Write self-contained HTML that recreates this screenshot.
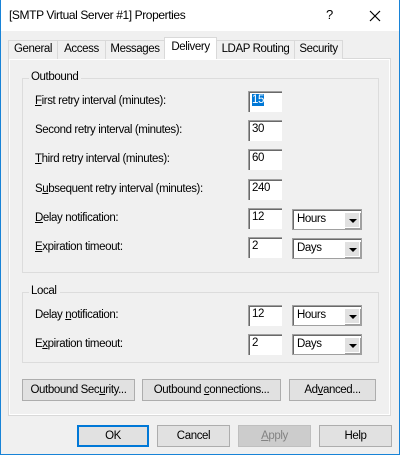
<!DOCTYPE html>
<html><head><style>
*{box-sizing:border-box;margin:0;padding:0}
body{width:400px;height:455px;background:#f0f0f0;font-family:"Liberation Sans",sans-serif;font-size:11.5px;letter-spacing:-0.4px;color:#000;position:relative;overflow:hidden}
.a{position:absolute;white-space:nowrap}
.win{position:absolute;left:0;top:0;width:400px;height:455px;border:1px solid #1883d7;border-top:none}
.title{position:absolute;left:0;top:0;width:400px;height:31px;background:#fff}
.tab{position:absolute;top:40px;height:19px;border:1px solid #d9d9d9;border-bottom:none;background:#f0f0f0;text-align:center;line-height:17px}
.tab.sel{top:37px;height:22px;background:#fff;border-color:#d9d9d9;z-index:2;line-height:19px}
.panel{position:absolute;left:8px;top:58px;width:383px;height:358px;border:1px solid #d9d9d9;background:#fff}
.inner{position:absolute;left:1px;top:1px;right:1px;bottom:1px;background:#f0f0f0}
.grp{position:absolute;border:1px solid #dcdcdc}
.gl{position:absolute;background:#f0f0f0;padding:0 3px 0 2px;top:-8px;left:6px}
.tb{position:absolute;width:36px;height:23px;background:#fff;border:1px solid #f0f0f0;box-shadow:inset 1px 1px 0 #a0a0a0,inset 2px 2px 0 #696969;padding:3px 0 0 4px}
.dd{position:absolute;width:70px;height:21px;background:#fff;border:1px solid #a0a0a0;box-shadow:inset 1px 1px 0 #696969;padding:3px 0 0 4px}
.dd .ar{position:absolute;right:1px;top:2px;width:16px;height:16px;background:#e1e1e1;border:1px solid #fff;box-shadow:1px 1px 0 #a0a0a0}
.dd .ar:after{content:"";position:absolute;left:4px;top:6px;border-left:4px solid transparent;border-right:4px solid transparent;border-top:4px solid #000}
.btn{position:absolute;height:22px;background:#e1e1e1;border:1px solid #adadad;text-align:center;line-height:20px}
u{text-decoration:underline}
</style></head><body>
<div class="title"></div>
<div class="a" style="left:9px;top:8px;font-size:12px">[SMTP Virtual Server #1] Properties</div>
<div class="a" style="left:326px;top:7px;font-size:13px">?</div>
<svg class="a" style="left:369px;top:10px" width="12" height="12"><path d="M1 1L11 11M11 1L1 11" stroke="#000" stroke-width="1.2"/></svg>
<div class="win"></div>

<div class="panel"><div class="inner"></div></div>
<div class="tab" style="left:8px;width:50px">General</div>
<div class="tab" style="left:57px;width:49px">Access</div>
<div class="tab" style="left:105px;width:60px">Messages</div>
<div class="tab sel" style="left:164px;width:53px">Delivery</div>
<div class="tab" style="left:216px;width:79px">LDAP Routing</div>
<div class="tab" style="left:294px;width:49px">Security</div>

<div class="grp" style="left:22px;top:78px;width:357px;height:195px"><div class="gl">Outbound</div></div>
<div class="a" style="left:35px;top:95px"><u>F</u>irst retry interval (minutes):</div>
<div class="a" style="left:35px;top:124px">Second retry interval (minutes):</div>
<div class="a" style="left:35px;top:153px"><u>T</u>hird retry interval (minutes):</div>
<div class="a" style="left:35px;top:183px">S<u>u</u>bsequent retry interval (minutes):</div>
<div class="a" style="left:35px;top:212px"><u>D</u>elay notification:</div>
<div class="a" style="left:35px;top:241px"><u>E</u>xpiration timeout:</div>
<div class="tb" style="left:247px;top:90px"><span style="background:#0078d7;color:#fff">15</span></div>
<div class="tb" style="left:247px;top:119px">30</div>
<div class="tb" style="left:247px;top:148px">60</div>
<div class="tb" style="left:247px;top:178px">240</div>
<div class="tb" style="left:247px;top:207px">12</div>
<div class="tb" style="left:247px;top:236px">2</div>
<div class="dd" style="left:292px;top:209px">Hours<div class="ar"></div></div>
<div class="dd" style="left:292px;top:238px">Days<div class="ar"></div></div>

<div class="grp" style="left:22px;top:292px;width:357px;height:71px"><div class="gl">Local</div></div>
<div class="a" style="left:35px;top:309px">Delay <u>n</u>otification:</div>
<div class="a" style="left:35px;top:338px">E<u>x</u>piration timeout:</div>
<div class="tb" style="left:247px;top:304px">12</div>
<div class="tb" style="left:247px;top:333px">2</div>
<div class="dd" style="left:292px;top:305px">Hours<div class="ar"></div></div>
<div class="dd" style="left:292px;top:334px">Days<div class="ar"></div></div>

<div class="btn" style="left:22px;top:379px;width:113px">Outbound Sec<u>u</u>rity...</div>
<div class="btn" style="left:142px;top:379px;width:139px">Outbound <u>c</u>onnections...</div>
<div class="btn" style="left:289px;top:379px;width:87px">Ad<u>v</u>anced...</div>

<div class="btn" style="left:77px;top:425px;width:72px;border:2px solid #0078d7;line-height:18px">OK</div>
<div class="btn" style="left:157px;top:425px;width:73px">Cancel</div>
<div class="btn" style="left:238px;top:425px;width:73px;background:#ccc;border-color:#bfbfbf;color:#838383"><u>A</u>pply</div>
<div class="btn" style="left:319px;top:425px;width:73px">Help</div>
</body></html>
